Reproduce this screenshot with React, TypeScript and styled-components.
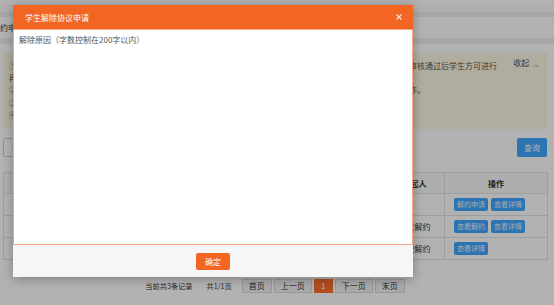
import styled, { createGlobalStyle } from "styled-components";

const GlobalStyle = createGlobalStyle`
    html, body { margin: 0; padding: 0; }
    body {
        width: 554px; height: 305px; overflow: hidden;
        font-family: "Noto Sans CJK SC", "Noto Sans", sans-serif;
    }
`;

const noticeLines = [
    '①学生与用人单位签订就业协议后，如需解除协议，须先由学生提交解约申请，经用人单位同意并由学校就业部门审核通过后学生方可进行',
    '再次签约，解约申请未审核通过前不得重复签约。',
    '②用人单位或学校发起的解约申请，学生需点击【查看解约】确认，确认后进入学校审核环节，请及时处理相关操作。',
    '③解约申请审核通过后，原就业协议自动失效。',
    '④如有疑问请联系学院就业负责老师。',
];

const columns = [
    { title: '序号', width: 40 },
    { title: '学号', width: 70 },
    { title: '姓名', width: 55 },
    { title: '单位名称', width: 112 },
    { title: '申请时间', width: 70 },
    { title: '状态', width: 34 },
    { title: '发起人', width: 60 },
    { title: '操作', width: 103 },
];

const rows = [
    { cells: ['1', '2019010101', '张三', '某某科技有限公司', '2023-05-12', '待审', ''], ops: ['解约申请', '查看详情'] },
    { cells: ['2', '2019010102', '李四', '某某教育集团', '2023-05-10', '待审', '单位解约'], ops: ['查看解约', '查看详情'] },
    { cells: ['3', '2019010103', '王五', '某某信息技术公司', '2023-04-28', '通过', '学校解约'], ops: ['查看详情'] },
];

const App = () => {
    return (
        <Page>
            <GlobalStyle />
            <TopStrip />
            <NavBar />
            <Band />
            <TitleRow>约申请</TitleRow>
            <Band $h={6} />

            <Content>
                <Notice>
                    <NoticeList>
                        {noticeLines.map((line, i) => <NoticeLine key={i}>{line}</NoticeLine>)}
                    </NoticeList>
                    <Toggle>收起 <Caret>︿</Caret></Toggle>
                </Notice>

                <SearchRow>
                    <SearchBox>学年</SearchBox>
                    <BlueButton>查询</BlueButton>
                </SearchRow>

                <Table>
                    <colgroup>
                        {columns.map(c => <col key={c.title} style={{ width: c.width }} />)}
                    </colgroup>
                    <thead>
                        <tr>{columns.map(c => <Th key={c.title}>{c.title}</Th>)}</tr>
                    </thead>
                    <tbody>
                        {rows.map((r, i) => (
                            <tr key={i}>
                                {r.cells.map((c, j) => <Td key={j}>{c}</Td>)}
                                <OpCell>
                                    {r.ops.map(op => <SmallButton key={op}>{op}</SmallButton>)}
                                </OpCell>
                            </tr>
                        ))}
                    </tbody>
                </Table>

                <Pager>
                    <PagerText>当前共3条记录</PagerText>
                    <PagerText>共1/1页</PagerText>
                    <PagerButtons>
                        <PageBtn>首页</PageBtn>
                        <PageBtn>上一页</PageBtn>
                        <PageBtn $active>1</PageBtn>
                        <PageBtn>下一页</PageBtn>
                        <PageBtn>末页</PageBtn>
                    </PagerButtons>
                </Pager>
            </Content>

            <Mask />

            <Modal>
                <ModalHeader>
                    <ModalTitle>学生解除协议申请</ModalTitle>
                    <CloseBtn aria-label="关闭">
                        <svg viewBox="0 0 6 6" width="6" height="6">
                            <path d="M0.5 0.5 L5.5 5.5 M5.5 0.5 L0.5 5.5" stroke="#fff" strokeWidth="1.1" strokeOpacity="0.85" />
                        </svg>
                    </CloseBtn>
                </ModalHeader>
                <ReasonInput placeholder="解除原因（字数控制在200字以内）" />
                <ModalFooter>
                    <ConfirmBtn>确定</ConfirmBtn>
                </ModalFooter>
            </Modal>
        </Page>
    );
};

// ─── Styled Components ────────────────────────────────────────────────────────
const Page = styled.div`
    position: relative;
    width: 554px; height: 305px;
    background: #ffffff;
    overflow: hidden;
    font-size: 8px; color: #333;
`;
const TopStrip = styled.div`height: 4px; background: #ffffff;`;
const NavBar = styled.div`height: 8px; background: #fbfbfb;`;
const Band = styled.div<{ $h?: number }>`height: ${p => p.$h ?? 5}px; background: #f0f0f0;`;
const TitleRow = styled.div`
    height: 21px; display: flex; align-items: center;
    font-size: 8px; color: #333; background: #ffffff;
`;
const Content = styled.div`padding: 9px 7px 0 3px;`;
const Notice = styled.div`
    display: flex; align-items: flex-start;
    height: 76px; box-sizing: border-box;
    padding: 7px 8px 0 6px;
    background: #fcf8e3;
    color: #5e5443;
`;
const NoticeList = styled.div`flex: 1; min-width: 0;`;
const NoticeLine = styled.div`white-space: nowrap; line-height: 12.2px; font-size: 8px;`;
const Toggle = styled.div`
    margin-top: -3px; white-space: nowrap;
    font-size: 8px; color: #5a4a6a;
`;
const Caret = styled.span`font-size: 6px; margin-left: 2px;`;
const SearchRow = styled.div`
    display: flex; justify-content: space-between; align-items: center;
    margin-top: 9px;
`;
const SearchBox = styled.div`
    width: 140px; height: 19px; box-sizing: border-box;
    border: 1px solid #ccc; border-radius: 2px;
    padding-left: 8px; display: flex; align-items: center;
    font-size: 8px; color: #555;
`;
const BlueButton = styled.button`
    width: 30px; height: 19px; padding: 0;
    border: none; border-radius: 2px;
    background: #3ea6ff; color: #fff;
    font-family: inherit; font-size: 8px;
`;
const Table = styled.table`
    width: 544px; margin-top: 15px;
    border-collapse: collapse; table-layout: fixed;
    font-size: 8px; color: #333;
`;
const Th = styled.th`
    height: 20px; padding: 0;
    border: 1px solid #e3e3e3; background: #fafafa;
    font-weight: bold; text-align: center;
`;
const Td = styled.td`
    height: 21px; padding: 0; line-height: 10px;
    border: 1px solid #e3e3e3;
    text-align: center; white-space: nowrap; overflow: hidden;
`;
const OpCell = styled.td`
    height: 21px; padding: 0 0 0 9px; line-height: 10px;
    border: 1px solid #e3e3e3; white-space: nowrap;
`;
const SmallButton = styled.button`
    width: 34px; height: 13px; padding: 0; margin-right: 3px;
    border: none; border-radius: 2px;
    background: #3ea6ff; color: #e8f2fb;
    font-family: inherit; font-size: 7px; line-height: 13px; vertical-align: middle;
`;
const Pager = styled.div`
    display: flex; justify-content: center; align-items: center;
    margin-top: 19px; gap: 14px;
`;
const PagerText = styled.span`font-size: 7.2px; color: #333;`;
const PagerButtons = styled.div`display: flex; gap: 2px; margin-left: -4px;`;
const PageBtn = styled.button<{ $active?: boolean }>`
    height: 14px; min-width: 19px; padding: 0 6px;
    border: 1px solid ${p => p.$active ? '#ff6f2a' : '#d8d8d8'};
    background: ${p => p.$active ? '#ff6f2a' : '#f3f3f3'};
    color: ${p => p.$active ? '#fff' : '#333'};
    font-family: inherit; font-size: 8px; line-height: 12px;
`;
const Mask = styled.div`
    position: absolute; left: 0; right: 0; top: 0; bottom: 0;
    background: rgba(0, 0, 0, 0.3);
`;
const Modal = styled.div`
    position: absolute; left: 13px; top: 5px;
    width: 400px; height: 272px;
    display: flex; flex-direction: column;
    background: #f6f6f6;
    box-shadow: 0 2px 10px rgba(0, 0, 0, 0.3);
`;
const ModalHeader = styled.div`
    height: 24px; flex-shrink: 0;
    display: flex; align-items: center; justify-content: space-between;
    padding: 0 11px 0 12px;
    background: #f26522;
`;
const ModalTitle = styled.div`font-size: 8px; color: #fff;`;
const CloseBtn = styled.button`
    display: flex; padding: 0; border: none; background: none;
`;
const ReasonInput = styled.textarea`
    height: 216px; flex-shrink: 0; box-sizing: border-box;
    margin: 0; padding: 4px 5px; resize: none; outline: none;
    border: 1px solid #f7a680; background: #fff;
    font-family: inherit; font-size: 8px; color: #333;
    &::placeholder { color: #555; }
`;
const ModalFooter = styled.div`
    flex: 1; display: flex; align-items: center; justify-content: center;
    padding-top: 1px;
`;
const ConfirmBtn = styled.button`
    width: 34px; height: 17px; padding: 0;
    border: none; border-radius: 2px;
    background: #f26522; color: #fff;
    font-family: inherit; font-size: 8px;
`;

export default App;
